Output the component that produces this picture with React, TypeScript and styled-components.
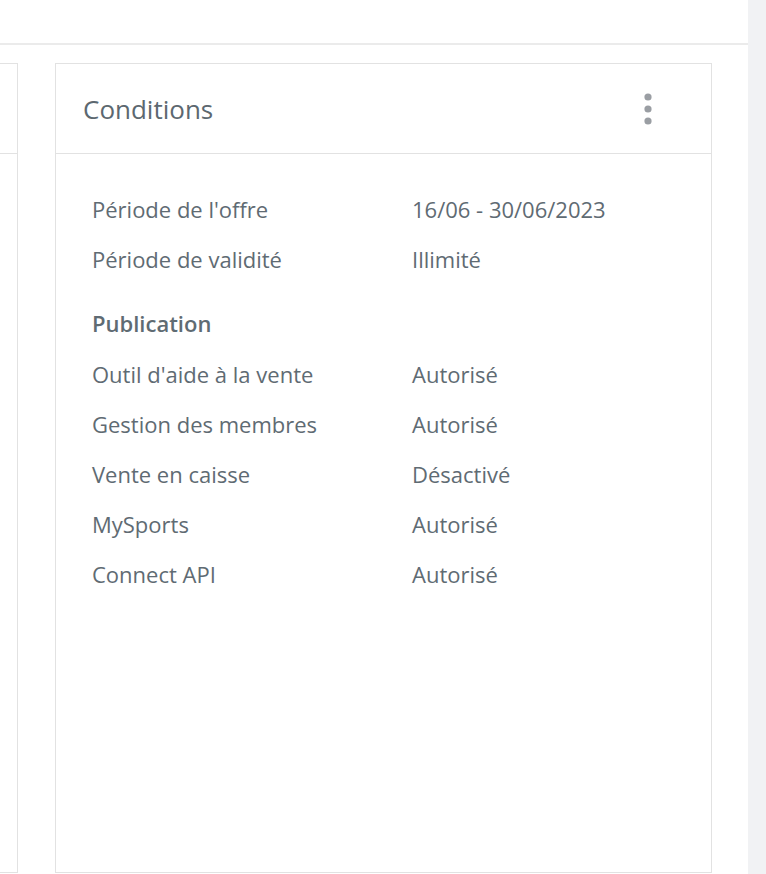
import React from 'react';
import styled, { createGlobalStyle } from 'styled-components';

const GlobalStyle = createGlobalStyle`
  html, body {
    margin: 0;
    padding: 0;
    background: #ffffff;
    font-family: "Open Sans", Lato, sans-serif;
    overflow: hidden;
  }
`;

const Screen = styled.div`
  display: flex;
  width: 766px;
  height: 874px;
  overflow: hidden;
`;

const Main = styled.div`
  flex: 1;
  display: flex;
  flex-direction: column;
  min-width: 0;
`;

const ScrollTrack = styled.div`
  flex: 0 0 18px;
  background: #f1f2f4;
`;

const TopBar = styled.div`
  height: 43px;
  flex: 0 0 auto;
  border-bottom: 2px solid #ebebeb;
  background: #ffffff;
`;

const Content = styled.div`
  flex: 1;
  display: flex;
  gap: 37px;
  padding: 18px 36px 0 0;
  min-height: 0;
`;

const Card = styled.div<{ $offscreen?: boolean }>`
  flex: ${(p) => (p.$offscreen ? '0 0 600px' : '1')};
  margin-left: ${(p) => (p.$offscreen ? '-582px' : '0')};
  height: 810px;
  border: 1px solid #e2e2e2;
  background: #ffffff;
  display: flex;
  flex-direction: column;
  box-sizing: border-box;
`;

const CardHeader = styled.div`
  height: 89px;
  flex: 0 0 auto;
  border-bottom: 1px solid #e2e2e2;
  display: flex;
  align-items: center;
  justify-content: space-between;
  padding: 0 56px 0 27px;
`;

const CardTitle = styled.h2`
  margin: 0;
  font-size: 26px;
  font-weight: 400;
  color: #5c6870;
`;

const KebabButton = styled.button`
  background: none;
  border: none;
  padding: 0;
  width: 14px;
  height: 34px;
  display: flex;
  align-items: center;
  justify-content: center;
  cursor: pointer;
`;

const CardBody = styled.div`
  padding: 30px 36px 0 36px;
  display: flex;
  flex-direction: column;
`;

const Row = styled.div`
  display: grid;
  grid-template-columns: 320px 1fr;
  height: 50px;
  align-items: center;
  font-size: 22px;
  color: #5f6b73;
`;

const SectionTitle = styled.div`
  margin-top: 13px;
  height: 52px;
  display: flex;
  align-items: center;
  font-size: 22px;
  font-weight: 600;
  color: #5f6b73;
`;

const general = [
  { label: "Période de l'offre", value: '16/06 - 30/06/2023' },
  { label: 'Période de validité', value: 'Illimité' },
];

const publication = [
  { label: "Outil d'aide à la vente", value: 'Autorisé' },
  { label: 'Gestion des membres', value: 'Autorisé' },
  { label: 'Vente en caisse', value: 'Désactivé' },
  { label: 'MySports', value: 'Autorisé' },
  { label: 'Connect API', value: 'Autorisé' },
];

const KebabIcon = () => (
  <svg width="10" height="34" viewBox="0 0 10 34">
    <circle cx="5" cy="5" r="3.6" fill="#9a9ea3" />
    <circle cx="5" cy="17" r="3.6" fill="#9a9ea3" />
    <circle cx="5" cy="29" r="3.6" fill="#9a9ea3" />
  </svg>
);

const App: React.FC = () => {
  return (
    <>
      <GlobalStyle />
      <Screen>
        <Main>
          <TopBar />
          <Content>
            <Card $offscreen>
              <CardHeader />
            </Card>
            <Card>
              <CardHeader>
                <CardTitle>Conditions</CardTitle>
                <KebabButton aria-label="Options">
                  <KebabIcon />
                </KebabButton>
              </CardHeader>
              <CardBody>
                {general.map((r) => (
                  <Row key={r.label}>
                    <span>{r.label}</span>
                    <span>{r.value}</span>
                  </Row>
                ))}
                <SectionTitle>Publication</SectionTitle>
                {publication.map((r) => (
                  <Row key={r.label}>
                    <span>{r.label}</span>
                    <span>{r.value}</span>
                  </Row>
                ))}
              </CardBody>
            </Card>
          </Content>
        </Main>
        <ScrollTrack />
      </Screen>
    </>
  );
};

export default App;
